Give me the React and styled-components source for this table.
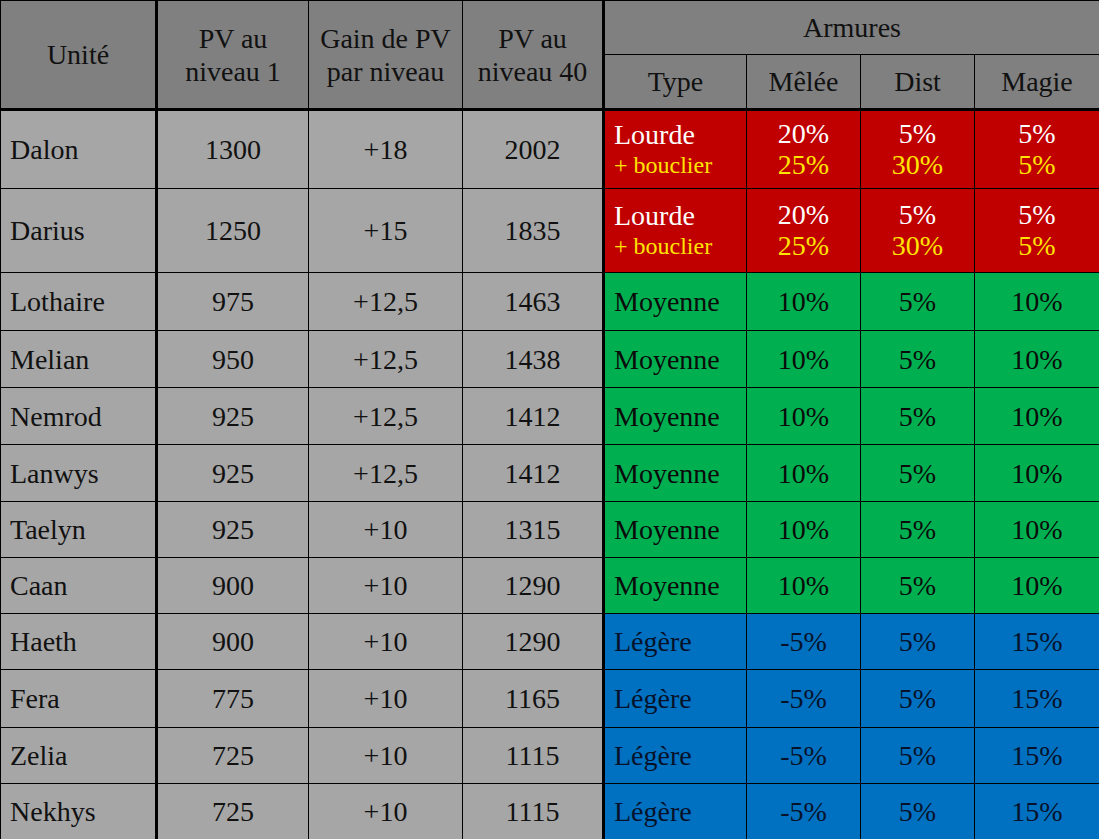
import React from 'react';
import styled, { createGlobalStyle } from 'styled-components';

const GlobalStyle = createGlobalStyle`
  html, body {
    margin: 0;
    padding: 0;
    background: #a6a6a6;
    overflow: hidden;
  }
  body {
    font-family: 'Liberation Serif', 'Times New Roman', serif;
  }
`;

const armorColors = {
  lourde: { bg: '#c00000', fg: '#ffffff' },
  moyenne: { bg: '#00b050', fg: '#0b0b0b' },
  legere: { bg: '#0070c0', fg: '#06122a' },
};

const Table = styled.table`
  width: 1099px;
  table-layout: fixed;
  border-collapse: collapse;
  font-size: 28px;
  color: #111;
`;

const HeadCell = styled.th`
  background: #808080;
  font-weight: 400;
  line-height: 33px;
  text-align: center;
  vertical-align: middle;
  padding: 0;
  border: 1px solid #000;
  border-left: ${({ $thickLeft }) => ($thickLeft ? '3px solid #000' : '1px solid #000')};
  border-bottom: ${({ $thickBottom }) => ($thickBottom ? '3px solid #000' : '1px solid #000')};
`;

const HeadRow = styled.tr`
  height: ${({ $h }) => $h}px;
`;

const BodyRow = styled.tr`
  height: ${({ $h }) => $h}px;
`;

const Cell = styled.td`
  background: ${({ $bg }) => $bg || '#a6a6a6'};
  color: ${({ $fg }) => $fg || '#111'};
  text-align: ${({ $left }) => ($left ? 'left' : 'center')};
  padding: ${({ $left }) => ($left ? '0 0 0 9px' : '0')};
  line-height: 31px;
  vertical-align: middle;
  border: 1px solid #000;
  border-left: ${({ $thickLeft }) => ($thickLeft ? '3px solid #000' : '1px solid #000')};
  white-space: nowrap;
`;

const Extra = styled.span`
  display: block;
  color: #ffe400;
  font-size: ${({ $small }) => ($small ? '24px' : 'inherit')};
  line-height: ${({ $small }) => ($small ? '30px' : '32px')};
`;

const units = [
  ['Dalon', 1300, '+18', 2002, 'lourde', 79],
  ['Darius', 1250, '+15', 1835, 'lourde', 84],
  ['Lothaire', 975, '+12,5', 1463, 'moyenne', 58],
  ['Melian', 950, '+12,5', 1438, 'moyenne', 57],
  ['Nemrod', 925, '+12,5', 1412, 'moyenne', 57],
  ['Lanwys', 925, '+12,5', 1412, 'moyenne', 57],
  ['Taelyn', 925, '+10', 1315, 'moyenne', 56],
  ['Caan', 900, '+10', 1290, 'moyenne', 56],
  ['Haeth', 900, '+10', 1290, 'legere', 56],
  ['Fera', 775, '+10', 1165, 'legere', 58],
  ['Zelia', 725, '+10', 1115, 'legere', 56],
  ['Nekhys', 725, '+10', 1115, 'legere', 56],
];

const armors = {
  lourde: { label: 'Lourde', extra: '+ bouclier', values: ['20%', '5%', '5%'], shield: ['25%', '30%', '5%'] },
  moyenne: { label: 'Moyenne', values: ['10%', '5%', '10%'] },
  legere: { label: 'Légère', values: ['-5%', '5%', '15%'] },
};

const widths = [156, 152, 154, 141, 143, 114, 114, 125];

export default function App() {
  return (
    <>
      <GlobalStyle />
      <Table>
        <colgroup>
          {widths.map((w, i) => (
            <col key={i} style={{ width: w }} />
          ))}
        </colgroup>
        <thead>
          <HeadRow $h={54}>
            <HeadCell rowSpan={2} $thickBottom>Unité</HeadCell>
            <HeadCell rowSpan={2} $thickBottom $thickLeft>PV au<br />niveau 1</HeadCell>
            <HeadCell rowSpan={2} $thickBottom>Gain de PV<br />par niveau</HeadCell>
            <HeadCell rowSpan={2} $thickBottom>PV au<br />niveau 40</HeadCell>
            <HeadCell colSpan={4} $thickLeft>Armures</HeadCell>
          </HeadRow>
          <HeadRow $h={55}>
            <HeadCell $thickBottom $thickLeft>Type</HeadCell>
            <HeadCell $thickBottom>Mêlée</HeadCell>
            <HeadCell $thickBottom>Dist</HeadCell>
            <HeadCell $thickBottom>Magie</HeadCell>
          </HeadRow>
        </thead>
        <tbody>
          {units.map(([name, pv1, gain, pv40, kind, h]) => {
            const a = armors[kind];
            const c = armorColors[kind];
            return (
              <BodyRow key={name} $h={h}>
                <Cell $left>{name}</Cell>
                <Cell $thickLeft>{pv1}</Cell>
                <Cell>{gain}</Cell>
                <Cell>{pv40}</Cell>
                <Cell $left $thickLeft $bg={c.bg} $fg={c.fg}>
                  {a.label}
                  {a.extra && <Extra $small>{a.extra}</Extra>}
                </Cell>
                {a.values.map((v, i) => (
                  <Cell key={i} $bg={c.bg} $fg={c.fg}>
                    {v}
                    {a.shield && <Extra>{a.shield[i]}</Extra>}
                  </Cell>
                ))}
              </BodyRow>
            );
          })}
        </tbody>
      </Table>
    </>
  );
}
